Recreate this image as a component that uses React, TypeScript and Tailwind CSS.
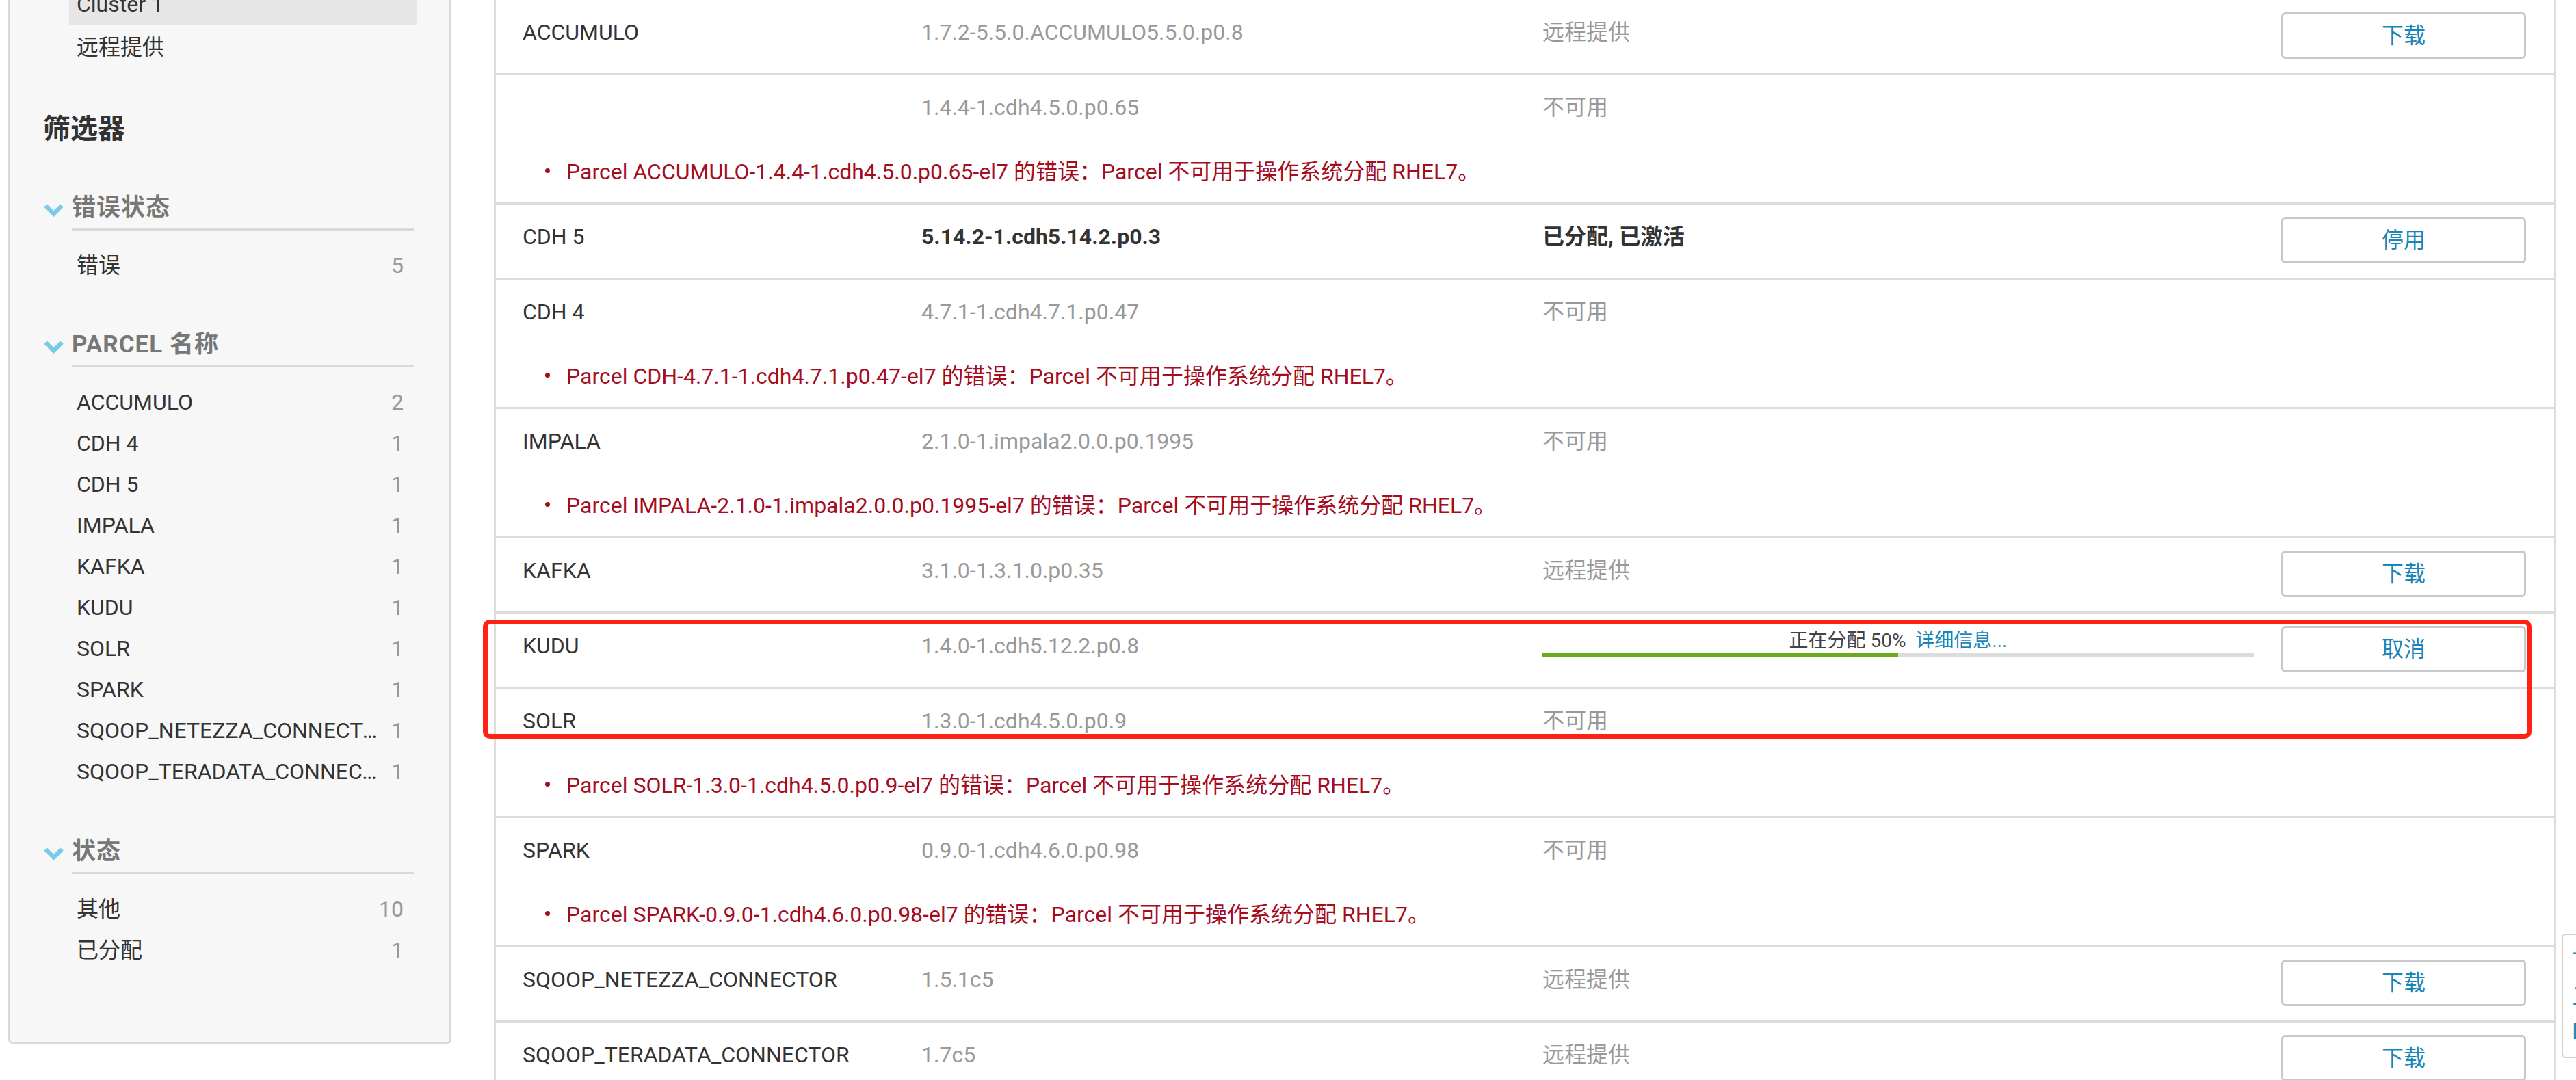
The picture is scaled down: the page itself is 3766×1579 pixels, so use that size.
import React from 'react';

type Row = {
  name: string;
  version: string;
  status?: string;
  strong?: boolean;
  action?: string;
  error?: string;
  progress?: number;
};

const rows: Row[] = [
  { name: 'ACCUMULO', version: '1.7.2-5.5.0.ACCUMULO5.5.0.p0.8', status: '远程提供', action: '下载' },
  {
    name: '',
    version: '1.4.4-1.cdh4.5.0.p0.65',
    status: '不可用',
    error: 'Parcel ACCUMULO-1.4.4-1.cdh4.5.0.p0.65-el7 的错误：Parcel 不可用于操作系统分配 RHEL7。',
  },
  { name: 'CDH 5', version: '5.14.2-1.cdh5.14.2.p0.3', status: '已分配, 已激活', strong: true, action: '停用' },
  {
    name: 'CDH 4',
    version: '4.7.1-1.cdh4.7.1.p0.47',
    status: '不可用',
    error: 'Parcel CDH-4.7.1-1.cdh4.7.1.p0.47-el7 的错误：Parcel 不可用于操作系统分配 RHEL7。',
  },
  {
    name: 'IMPALA',
    version: '2.1.0-1.impala2.0.0.p0.1995',
    status: '不可用',
    error: 'Parcel IMPALA-2.1.0-1.impala2.0.0.p0.1995-el7 的错误：Parcel 不可用于操作系统分配 RHEL7。',
  },
  { name: 'KAFKA', version: '3.1.0-1.3.1.0.p0.35', status: '远程提供', action: '下载' },
  { name: 'KUDU', version: '1.4.0-1.cdh5.12.2.p0.8', progress: 50, action: '取消' },
  {
    name: 'SOLR',
    version: '1.3.0-1.cdh4.5.0.p0.9',
    status: '不可用',
    error: 'Parcel SOLR-1.3.0-1.cdh4.5.0.p0.9-el7 的错误：Parcel 不可用于操作系统分配 RHEL7。',
  },
  {
    name: 'SPARK',
    version: '0.9.0-1.cdh4.6.0.p0.98',
    status: '不可用',
    error: 'Parcel SPARK-0.9.0-1.cdh4.6.0.p0.98-el7 的错误：Parcel 不可用于操作系统分配 RHEL7。',
  },
  { name: 'SQOOP_NETEZZA_CONNECTOR', version: '1.5.1c5', status: '远程提供', action: '下载' },
  { name: 'SQOOP_TERADATA_CONNECTOR', version: '1.7c5', status: '远程提供', action: '下载' },
];

const parcelNames: [string, number][] = [
  ['ACCUMULO', 2],
  ['CDH 4', 1],
  ['CDH 5', 1],
  ['IMPALA', 1],
  ['KAFKA', 1],
  ['KUDU', 1],
  ['SOLR', 1],
  ['SPARK', 1],
  ['SQOOP_NETEZZA_CONNECTOR', 1],
  ['SQOOP_TERADATA_CONNECTOR', 1],
];

const FilterHeader: React.FC<{ label: string; className?: string }> = ({ label, className }) => (
  <div className={`flex items-start pl-[48px] ${className ?? ''}`}>
    <svg className="w-[31px] h-[20px] mt-[15px] mr-[11px] shrink-0" viewBox="0 0 31 20">
      <path d="M3.5 3.5 L15.5 15.5 L27.5 3.5" stroke="#7ccaea" strokeWidth="6.5" fill="none" />
    </svg>
    <div className="w-[500px] border-b-[3px] border-[#d9d9d9] pb-[8px] text-[35px] leading-[44px] font-bold text-[#777] tracking-[1px]">
      {label}
    </div>
  </div>
);

const FilterItem: React.FC<{ label: string; count: number }> = ({ label, count }) => (
  <div className="flex justify-between w-[478px] ml-[97px] text-[32px] leading-[40px]">
    <span className="truncate text-[#333]">{label}</span>
    <span className="shrink-0 pl-[16px] text-[#999]">{count}</span>
  </div>
);

const Sidebar: React.FC = () => (
  <aside className="ml-[12px] w-[648px] h-[1526px] shrink-0 bg-[#f7f7f7] border-[3px] border-t-0 border-[#d9d9d9] rounded-b-[6px] flex flex-col">
    <div className="ml-[86px] w-[509px] h-[37px] bg-[#e6e6e6] flex items-end pl-[11px] pb-[11px] overflow-hidden">
      <span className="text-[32px] leading-[40px] text-[#333]">Cluster 1</span>
    </div>
    <div className="ml-[97px] mt-[12px] text-[32px] leading-[40px] text-[#333]">远程提供</div>

    <h2 className="ml-[48px] mt-[76px] text-[40px] leading-[48px] font-bold text-[#333]">筛选器</h2>

    <FilterHeader label="错误状态" className="mt-[69px]" />
    <div className="mt-[31px]">
      <FilterItem label="错误" count={5} />
    </div>

    <FilterHeader label="PARCEL 名称" className="mt-[74px]" />
    <div className="mt-[31px] flex flex-col gap-[20px]">
      {parcelNames.map(([n, c]) => (
        <FilterItem key={n} label={n} count={c} />
      ))}
    </div>

    <FilterHeader label="状态" className="mt-[75px]" />
    <div className="mt-[31px] flex flex-col gap-[20px]">
      <FilterItem label="其他" count={10} />
      <FilterItem label="已分配" count={1} />
    </div>
  </aside>
);

const ActionButton: React.FC<{ label: string }> = ({ label }) => (
  <button className="w-[358px] h-[68px] bg-white border-[3px] border-[#c8c8c8] rounded-[6px] text-[32px] leading-[40px] text-[#1a86b8]">
    {label}
  </button>
);

const ParcelRow: React.FC<{ row: Row }> = ({ row }) => (
  <div className="border-b-[3px] border-[#dcdcdc]">
    <div
      className={`grid grid-cols-[583px_908px_1080px_358px] pl-[39px] pt-[18px] ${row.error ? '' : 'h-[107px]'}`}
    >
      <div className="pt-[9px] leading-[40px] text-[#333]">{row.name}</div>
      <div className={`pt-[9px] leading-[40px] ${row.strong ? 'font-bold text-[#333]' : 'text-[#999]'}`}>
        {row.version}
      </div>
      {row.progress !== undefined ? (
        <div className="pt-[5px] w-[1040px]">
          <div className="text-center text-[28px] leading-[34px] text-[#444]">
            正在分配 {row.progress}%&nbsp;&nbsp;<span className="text-[#1a86b8]">详细信息...</span>
          </div>
          <div className="h-[6px] bg-[#dcdcdc]">
            <div className="h-full bg-[#6ca91f]" style={{ width: `${row.progress}%` }} />
          </div>
        </div>
      ) : (
        <div className={`pt-[9px] leading-[40px] ${row.strong ? 'font-bold text-[#333]' : 'text-[#999]'}`}>
          {row.status}
        </div>
      )}
      <div>{row.action && <ActionButton label={row.action} />}</div>
    </div>
    {row.error && (
      <div className="flex items-start pl-[72px] mt-[54px] mb-[25px] leading-[40px] text-[#a50d1f]">
        <span className="w-[7px] h-[7px] mt-[15px] rounded-full bg-[#a50d1f] shrink-0" />
        <span className="ml-[24px]">{row.error}</span>
      </div>
    )}
  </div>
);

export default function App() {
  return (
    <div className="relative h-[1579px] w-[3766px] overflow-hidden bg-white flex font-[Roboto,Noto_Sans_CJK_SC,sans-serif] text-[32px]">
      <Sidebar />

      <main className="ml-[62px] w-[3015px] shrink-0 border-x-[3px] border-[#dcdcdc] bg-white">
        {rows.map((r, i) => (
          <ParcelRow key={i} row={r} />
        ))}
      </main>

      {/* annotation box drawn over KUDU / SOLR */}
      <div className="absolute left-[706px] top-[906px] w-[2995px] h-[174px] border-[7px] border-[#ff2113] rounded-[10px] pointer-events-none" />

      {/* side tab, mostly off screen */}
      <div className="absolute left-[3745px] top-[1365px] w-[60px] h-[182px] bg-white border-2 border-[#d0d0d0] rounded-[6px] overflow-hidden">
        <div className="pl-[13px] pt-[22px] flex flex-col gap-[14px] text-[34px] leading-[36px] text-[#1a86b8]">
          <span>下</span>
          <span>三</span>
          <span>L</span>
        </div>
      </div>
    </div>
  );
}
